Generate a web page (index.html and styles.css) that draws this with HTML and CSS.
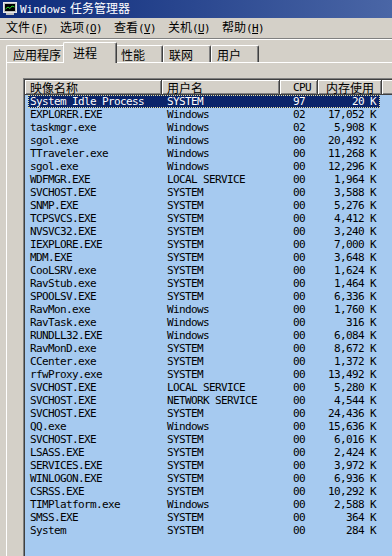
FILE: index.html
```html
<!DOCTYPE html>
<html lang="zh-CN">
<head>
  <meta charset="UTF-8">
  <title>Windows 任务管理器</title>
  <link rel="stylesheet" href="styles.css">
</head>
<body>
  <div class="window">
    <div class="titlebar">
      <svg class="app-icon" width="14" height="14" viewBox="0 0 14 14">
        <rect x="0.5" y="0.5" width="13" height="10" fill="#c0c0c0" stroke="#e8e8e8"/>
        <rect x="2" y="2" width="10" height="7" fill="#000"/>
        <polyline points="2.5,7 5,5 7,6.5 9,4 11.5,5" fill="none" stroke="#2fe02f"/>
        <rect x="3" y="11" width="8" height="2" fill="#c0c0c0"/>
      </svg>
      <span class="title"><span class="latin">Windows</span> 任务管理器</span>
    </div>

    <div class="menubar">
      <span class="menu">文件<span class="key">(<u>F</u>)</span></span>
      <span class="menu">选项<span class="key">(<u>O</u>)</span></span>
      <span class="menu">查看<span class="key">(<u>V</u>)</span></span>
      <span class="menu">关机<span class="key">(<u>U</u>)</span></span>
      <span class="menu">帮助<span class="key">(<u>H</u>)</span></span>
    </div>

    <div class="tabs">
      <div class="tab tab-first">应用程序</div>
      <div class="tab active">进程</div>
      <div class="tab">性能</div>
      <div class="tab">联网</div>
      <div class="tab">用户</div>
    </div>

    <div class="panel">
      <div class="listview">
        <div class="list-head">
          <div class="col-head">映像名称</div>
          <div class="col-head">用户名</div>
          <div class="col-head right latin">CPU</div>
          <div class="col-head right">内存使用</div>
          <div class="col-head"></div>
        </div>
        <div class="list-body">
          <div class="row selected"><span>System Idle Process</span><span>SYSTEM</span><span class="num">97</span><span class="mem">20 K</span></div>
          <div class="row"><span>EXPLORER.EXE</span><span>Windows</span><span class="num">02</span><span class="mem">17,052 K</span></div>
          <div class="row"><span>taskmgr.exe</span><span>Windows</span><span class="num">02</span><span class="mem">5,908 K</span></div>
          <div class="row"><span>sgol.exe</span><span>Windows</span><span class="num">00</span><span class="mem">20,492 K</span></div>
          <div class="row"><span>TTraveler.exe</span><span>Windows</span><span class="num">00</span><span class="mem">11,268 K</span></div>
          <div class="row"><span>sgol.exe</span><span>Windows</span><span class="num">00</span><span class="mem">12,296 K</span></div>
          <div class="row"><span>WDFMGR.EXE</span><span>LOCAL SERVICE</span><span class="num">00</span><span class="mem">1,964 K</span></div>
          <div class="row"><span>SVCHOST.EXE</span><span>SYSTEM</span><span class="num">00</span><span class="mem">3,588 K</span></div>
          <div class="row"><span>SNMP.EXE</span><span>SYSTEM</span><span class="num">00</span><span class="mem">5,276 K</span></div>
          <div class="row"><span>TCPSVCS.EXE</span><span>SYSTEM</span><span class="num">00</span><span class="mem">4,412 K</span></div>
          <div class="row"><span>NVSVC32.EXE</span><span>SYSTEM</span><span class="num">00</span><span class="mem">3,240 K</span></div>
          <div class="row"><span>IEXPLORE.EXE</span><span>SYSTEM</span><span class="num">00</span><span class="mem">7,000 K</span></div>
          <div class="row"><span>MDM.EXE</span><span>SYSTEM</span><span class="num">00</span><span class="mem">3,648 K</span></div>
          <div class="row"><span>CooLSRV.exe</span><span>SYSTEM</span><span class="num">00</span><span class="mem">1,624 K</span></div>
          <div class="row"><span>RavStub.exe</span><span>SYSTEM</span><span class="num">00</span><span class="mem">1,464 K</span></div>
          <div class="row"><span>SPOOLSV.EXE</span><span>SYSTEM</span><span class="num">00</span><span class="mem">6,336 K</span></div>
          <div class="row"><span>RavMon.exe</span><span>Windows</span><span class="num">00</span><span class="mem">1,760 K</span></div>
          <div class="row"><span>RavTask.exe</span><span>Windows</span><span class="num">00</span><span class="mem">316 K</span></div>
          <div class="row"><span>RUNDLL32.EXE</span><span>Windows</span><span class="num">00</span><span class="mem">6,084 K</span></div>
          <div class="row"><span>RavMonD.exe</span><span>SYSTEM</span><span class="num">00</span><span class="mem">8,672 K</span></div>
          <div class="row"><span>CCenter.exe</span><span>SYSTEM</span><span class="num">00</span><span class="mem">1,372 K</span></div>
          <div class="row"><span>rfwProxy.exe</span><span>SYSTEM</span><span class="num">00</span><span class="mem">13,492 K</span></div>
          <div class="row"><span>SVCHOST.EXE</span><span>LOCAL SERVICE</span><span class="num">00</span><span class="mem">5,280 K</span></div>
          <div class="row"><span>SVCHOST.EXE</span><span>NETWORK SERVICE</span><span class="num">00</span><span class="mem">4,544 K</span></div>
          <div class="row"><span>SVCHOST.EXE</span><span>SYSTEM</span><span class="num">00</span><span class="mem">24,436 K</span></div>
          <div class="row"><span>QQ.exe</span><span>Windows</span><span class="num">00</span><span class="mem">15,636 K</span></div>
          <div class="row"><span>SVCHOST.EXE</span><span>SYSTEM</span><span class="num">00</span><span class="mem">6,016 K</span></div>
          <div class="row"><span>LSASS.EXE</span><span>SYSTEM</span><span class="num">00</span><span class="mem">2,424 K</span></div>
          <div class="row"><span>SERVICES.EXE</span><span>SYSTEM</span><span class="num">00</span><span class="mem">3,972 K</span></div>
          <div class="row"><span>WINLOGON.EXE</span><span>SYSTEM</span><span class="num">00</span><span class="mem">6,936 K</span></div>
          <div class="row"><span>CSRSS.EXE</span><span>SYSTEM</span><span class="num">00</span><span class="mem">10,292 K</span></div>
          <div class="row"><span>TIMPlatform.exe</span><span>Windows</span><span class="num">00</span><span class="mem">2,588 K</span></div>
          <div class="row"><span>SMSS.EXE</span><span>SYSTEM</span><span class="num">00</span><span class="mem">364 K</span></div>
          <div class="row"><span>System</span><span>SYSTEM</span><span class="num">00</span><span class="mem">284 K</span></div>
        </div>
      </div>
    </div>
  </div>
</body>
</html>
```

FILE: styles.css
```css
body {
  margin: 0;
  background-color: #d4d0c8;
  font-family: "Noto Sans CJK SC", sans-serif;
  font-size: 12px;
  color: #000;
  overflow: hidden;
}
.window {
  width: 392px;
  height: 556px;
  overflow: hidden;
}
.latin {
  font-family: "DejaVu Sans Mono", monospace;
  font-size: 11px;
  letter-spacing: -0.62px;
}

/* title bar */
.titlebar {
  height: 18px;
  display: flex;
  align-items: center;
  background: linear-gradient(90deg, #0c2a7a, #4a66a6);
  color: #fff;
}
.app-icon {
  margin: 0 3px 0 3px;
  flex: none;
}
.title {
  line-height: 18px;
}
.title .latin {
  letter-spacing: 0;
  margin-right: 1px;
}

/* menu */
.menubar {
  height: 20px;
  display: flex;
  align-items: center;
  border-bottom: 1px solid #808080;
  box-shadow: 0 1px 0 #fff;
}
.menu {
  width: 42px;
  padding: 0 6px;
  white-space: nowrap;
  line-height: 16px;
}
.key {
  font-family: "DejaVu Sans Mono", monospace;
  font-size: 11px;
  letter-spacing: -0.62px;
}

/* tabs */
.tabs {
  display: flex;
  align-items: flex-end;
  height: 20px;
  margin-top: 3px;
  padding-left: 6px;
}
.tab {
  box-sizing: border-box;
  width: 48px;
  height: 17px;
  padding: 1px 0 0 5px;
  line-height: 15px;
  border-top: 1px solid #fff;
  border-left: 1px solid #fff;
  border-right: 1px solid #404040;
  border-radius: 2px 2px 0 0;
  box-shadow: inset -1px 0 #808080;
  background-color: #d4d0c8;
}
.tab-first {
  width: 59px;
  padding-left: 6px;
}
.tab.active {
  position: relative;
  z-index: 1;
  width: 54px;
  height: 21px;
  margin: 0 -2px -1px -2px;
  padding: 2px 0 0 9px;
}

/* panel + list */
.panel {
  margin-left: 6px;
  border-top: 1px solid #fff;
  border-left: 1px solid #fff;
  padding: 15px 0 0 16px;
  height: 600px;
}
.listview {
  width: 420px;
  height: 600px;
  border-top: 1px solid #808080;
  border-left: 1px solid #808080;
  padding: 1px 0 0 1px;
  box-shadow: inset 1px 1px #404040;
  background-color: #a6caf0;
}
.list-head {
  display: grid;
  grid-template-columns: 137px 118px 38px 64px 1fr;
  height: 15px;
}
.col-head {
  box-sizing: border-box;
  height: 15px;
  line-height: 16px;
  padding: 0 0 0 5px;
  background-color: #d4d0c8;
  box-shadow: inset -1px -1px #404040, inset 1px 1px #fff, inset -2px -2px #808080;
  white-space: nowrap;
}
.col-head.right {
  text-align: right;
  padding: 0 8px 0 0;
}
.col-head.latin {
  padding-right: 7px;
}

.list-body {
  font-family: "DejaVu Sans Mono", monospace;
  font-size: 11px;
  letter-spacing: -0.62px;
}
.row {
  display: grid;
  grid-template-columns: 134px 118px 38px 62px;
  width: 352px;
  height: 13px;
  margin-left: 3px;
  line-height: 14px;
  white-space: nowrap;
}
.row span:first-child {
  padding-left: 2px;
}
.row span:nth-child(2) {
  padding-left: 5px;
}
.row .num {
  text-align: right;
  padding-right: 13px;
}
.row .mem {
  text-align: right;
  padding-right: 4px;
}
.row.selected {
  background-color: #0a246a;
  color: #fff;
  outline: 1px dotted #e8e4a0;
  outline-offset: -1px;
}
```
